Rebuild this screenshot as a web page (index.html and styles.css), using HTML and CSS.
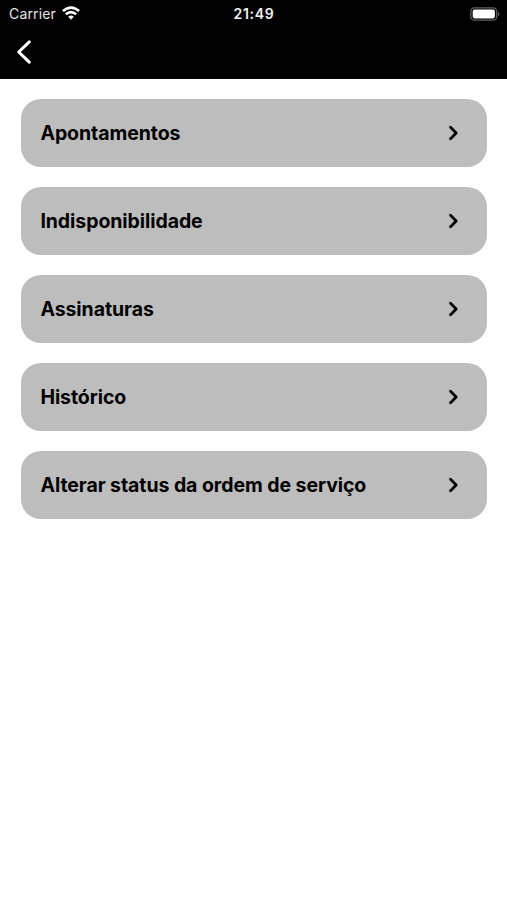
FILE: index.html
```html
<!DOCTYPE html>
<html lang="pt-BR">
<head>
<meta charset="utf-8">
<title>Ordem de serviço</title>
<link rel="stylesheet" href="styles.css">
</head>
<body>
<header class="header">
  <div class="status">
    <div class="carrier"><span>Carrier</span>
      <svg class="wifi" width="18" height="14" viewBox="0 0 18 14"><g fill="none" stroke="#fff" stroke-width="2.6"><path d="M.9 5.1Q9-2 17.1 5.1"/><path d="M3.8 8.3Q9 3.9 14.2 8.3"/></g><path d="M6.2 10.7Q9 8.5 11.8 10.7L9 13.7Z" fill="#fff"/></svg>
    </div>
    <time class="time">21:49</time>
    <svg class="battery" width="30" height="14" viewBox="0 0 30 14"><rect x=".8" y=".8" width="25.9" height="12.4" rx="3.6" fill="none" stroke="#606060" stroke-width="1.3"/><rect x="2.7" y="2.6" width="22.2" height="8.8" rx="1.8" fill="#fff"/><path d="M28 4.7Q31 7 28 9.3Z" fill="#606060"/></svg>
  </div>
  <button class="back" aria-label="Voltar"><svg width="16" height="26" viewBox="0 0 16 26"><path d="M13.3 2.8L2.7 13L13.3 23.2" fill="none" stroke="#fff" stroke-width="3" stroke-linecap="round" stroke-linejoin="round"/></svg></button>
</header>
<main class="menu">
  <button class="item"><span>Apontamentos</span><svg class="chevron" viewBox="0 0 10 16"><path d="M2.5 2.2L8.2 8L2.5 13.8"/></svg></button>
  <button class="item"><span>Indisponibilidade</span><svg class="chevron" viewBox="0 0 10 16"><path d="M2.5 2.2L8.2 8L2.5 13.8"/></svg></button>
  <button class="item"><span>Assinaturas</span><svg class="chevron" viewBox="0 0 10 16"><path d="M2.5 2.2L8.2 8L2.5 13.8"/></svg></button>
  <button class="item"><span>Histórico</span><svg class="chevron" viewBox="0 0 10 16"><path d="M2.5 2.2L8.2 8L2.5 13.8"/></svg></button>
  <button class="item"><span>Alterar status da ordem de serviço</span><svg class="chevron" viewBox="0 0 10 16"><path d="M2.5 2.2L8.2 8L2.5 13.8"/></svg></button>
</main>
</body>
</html>
```
FILE: styles.css
```css
* { box-sizing: border-box; }
body { margin: 0; min-height: 900px; background: #fff; font-family: Inter, sans-serif; }
button { border: 0; background: none; font: inherit; padding: 0; }
svg { display: block; }
.header { height: 79px; background: #000; color: #fff; }
.status { height: 27px; display: grid; grid-template-columns: 1fr auto 1fr; align-items: center; padding: 0 7px 0 9px; }
.carrier { display: flex; align-items: center; gap: 6px; font-size: 14px; letter-spacing: .15px; color: #e4e4e4; }
.wifi { position: relative; top: -1px; }
.time { font-size: 14px; font-weight: 600; letter-spacing: .7px; margin-right: 1px; color: #f2f2f2; }
.battery { justify-self: end; }
.back { display: block; margin: 12px 0 0 16px; }
.menu { display: flex; flex-direction: column; gap: 20px; padding: 19.6px 20px 20px 20.6px; }
.item { height: 68px; border-radius: 20px; background: #bdbdbd; color: #000; display: flex; align-items: center; justify-content: space-between; padding: 0 29px 0 19.8px; font-size: 19.5px; font-weight: 650; letter-spacing: -.07px; }
.chevron { width: 10px; height: 16px; fill: none; stroke: #000; stroke-width: 2.7; stroke-linecap: round; stroke-linejoin: round; }
```
